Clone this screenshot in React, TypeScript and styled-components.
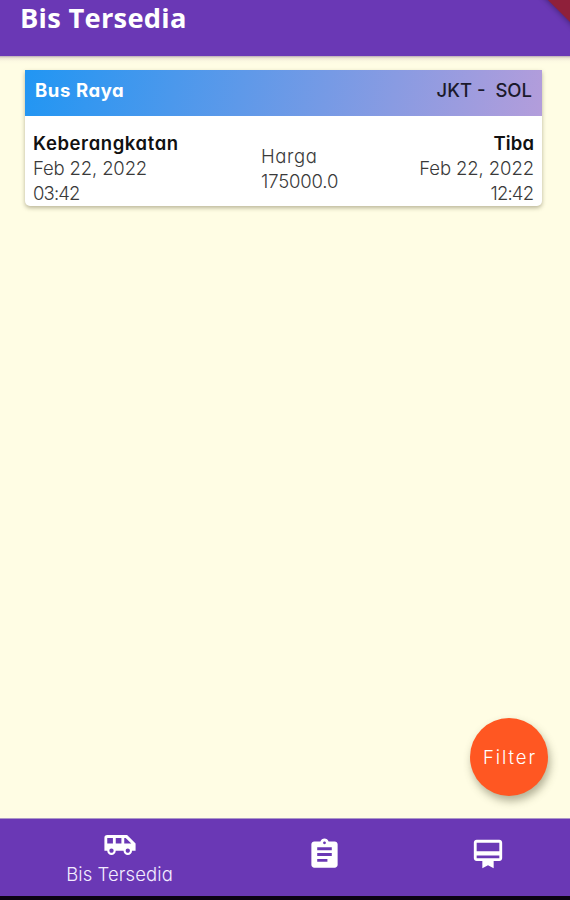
import React from "react";
import styled, { createGlobalStyle } from "styled-components";
import { MdAirportShuttle, MdAssignment, MdCardMembership } from "react-icons/md";

const GlobalStyle = createGlobalStyle`
  * { box-sizing: border-box; }
  body { margin: 0; overflow: hidden; background: #fffde4; }
`;

const Screen = styled.div`
  position: relative;
  display: flex;
  flex-direction: column;
  width: 570px;
  height: 900px;
  overflow: hidden;
  background: #fffde4;
  font-family: Inter, "Liberation Sans", sans-serif;
  font-feature-settings: "cv11";
`;

const AppBar = styled.header`
  position: relative;
  z-index: 1;
  flex: none;
  height: 56px;
  padding-left: 20px;
  overflow: hidden;
  background: #6a38b5;
`;

const BarShade = styled.div`
  flex: none;
  height: 14px;
  background: linear-gradient(#b9a9b6 0, #ede6d3 2px, #fcf9e2 5px, #fffde4 8px);
`;

const Title = styled.h1`
  margin: 0;
  font: 700 27.3px/36px "Open Sans", sans-serif;
  letter-spacing: 0.27px;
  color: #fff;
`;

const DebugRibbon = styled.div`
  position: absolute;
  top: -25px;
  right: -34px;
  width: 80px;
  height: 34px;
  background: #8f203a;
  box-shadow: 0 0 6px rgba(0, 0, 0, 0.45);
  transform: rotate(45deg);
`;

const Content = styled.main`
  flex: 1;
`;

const Card = styled.article`
  width: 517px;
  height: 136px;
  margin-left: 25px;
  border-radius: 0 0 5px 5px;
  background: #fff;
  box-shadow: 0 2px 4px rgba(70, 65, 30, 0.38);
`;

const CardHeader = styled.div`
  display: flex;
  justify-content: space-between;
  height: 46px;
  padding: 0 10px 0 10px;
  background: linear-gradient(100deg, #2196f3, #b39ddb);
`;

const Label = styled.span<{ $size?: number; $weight?: number; $spacing?: number; $color?: string; $line?: number }>`
  font-size: ${(p) => p.$size ?? 18.5}px;
  font-weight: ${(p) => p.$weight ?? 300};
  line-height: ${(p) => p.$line ?? 25}px;
  letter-spacing: ${(p) => p.$spacing ?? 0}px;
  margin-right: ${(p) => -(p.$spacing ?? 0)}px;
  color: ${(p) => p.$color ?? "#3a3a3a"};
  white-space: pre;
`;

const CardBody = styled.div`
  display: grid;
  grid-template-columns: 228px 1fr auto;
  padding: 15px 8px 0;
`;

const Column = styled.div<{ $end?: boolean; $drop?: number }>`
  display: flex;
  flex-direction: column;
  align-items: ${(p) => (p.$end ? "flex-end" : "flex-start")};
  padding-top: ${(p) => p.$drop ?? 0}px;
`;

const FilterButton = styled.button`
  position: absolute;
  left: 470px;
  top: 718px;
  width: 78px;
  height: 78px;
  padding: 0;
  border: 0;
  border-radius: 50%;
  background: #ff5722;
  box-shadow: 2px 5px 9px rgba(70, 70, 40, 0.42);
  font-family: inherit;
  font-feature-settings: inherit;
`;

const BottomBar = styled.nav`
  display: grid;
  grid-template-columns: 239px 171px 160px;
  flex: none;
  height: 82px;
  border-top: 1px solid #ad97c7;
  border-bottom: 4px solid #0b0314;
  background: #6a38b5;
`;

const Tab = styled.a<{ $top: number; $shift?: number }>`
  display: flex;
  flex-direction: column;
  align-items: center;
  padding-top: ${(p) => p.$top}px;
  padding-right: ${(p) => p.$shift ?? 0}px;
  color: #fff;
  svg { display: block; flex: none; }
`;

export default function App() {
  return (
    <Screen>
      <GlobalStyle />
      <AppBar>
        <Title>Bis Tersedia</Title>
        <DebugRibbon />
      </AppBar>
      <BarShade />
      <Content>
        <Card>
          <CardHeader>
            <Label $weight={700} $color="#fff" $line={41} $spacing={0.6}>Bus Raya</Label>
            <Label $weight={500} $color="#1c1a2c" $line={41}>{"JKT -  SOL"}</Label>
          </CardHeader>
          <CardBody>
            <Column>
              <Label $weight={600} $color="#111" $spacing={0.6}>Keberangkatan</Label>
              <Label $spacing={-0.15}>Feb 22, 2022</Label>
              <Label $spacing={-0.85}>03:42</Label>
            </Column>
            <Column $drop={13}>
              <Label $spacing={0.6}>Harga</Label>
              <Label $spacing={-0.15}>175000.0</Label>
            </Column>
            <Column $end>
              <Label $weight={600} $color="#111" $spacing={0.1}>Tiba</Label>
              <Label $spacing={-0.1}>Feb 22, 2022</Label>
              <Label $spacing={-0.85}>12:42</Label>
            </Column>
          </CardBody>
        </Card>
      </Content>
      <FilterButton>
        <Label $color="#fff" $spacing={1.9}>Filter</Label>
      </FilterButton>
      <BottomBar>
        <Tab $top={9}>
          <MdAirportShuttle size={34} />
          <Label $color="#f3ecff" $spacing={0.1}>Bis Tersedia</Label>
        </Tab>
        <Tab $top={18}>
          <MdAssignment size={35} />
        </Tab>
        <Tab $top={18} $shift={4}>
          <MdCardMembership size={34} />
        </Tab>
      </BottomBar>
    </Screen>
  );
}
